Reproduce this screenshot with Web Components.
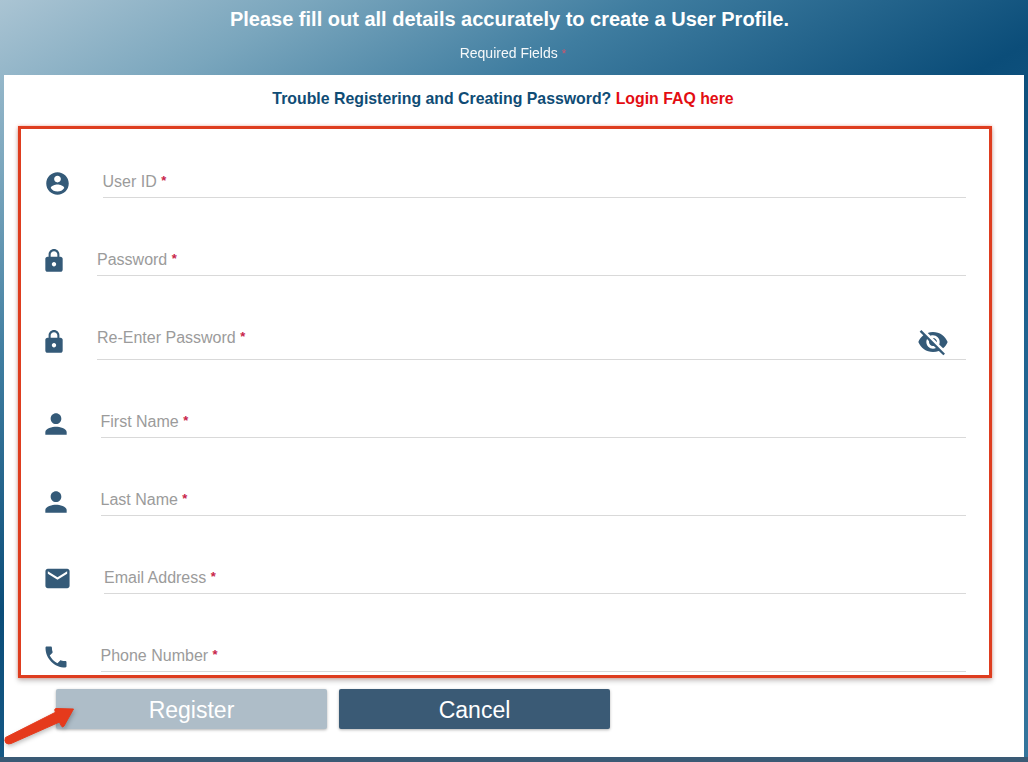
<!DOCTYPE html>
<html lang="en"><head><meta charset="utf-8"><title>Register</title>
<style>
html,body{margin:0;height:100%}
body{font-family:"Liberation Sans",Arial,sans-serif}
</style></head><body>
<reg-app>
  <reg-header slot="header"></reg-header>
  <reg-notice slot="notice"></reg-notice>
  <reg-row slot="rows" icon="account" label="User ID" style="--h:69px;--x:102.5px;--ix:44px;--is:27px;--ib:1px;--pb:4px"></reg-row>
  <reg-row slot="rows" icon="lock" label="Password" style="--h:78px;--x:97px;--ix:41px;--is:26px;--ib:2px;--pb:4px"></reg-row>
  <reg-row slot="rows" icon="lock" label="Re-Enter Password" eye style="--h:84px;--x:97px;--ix:41px;--is:26px;--ib:5px;--pb:10px"></reg-row>
  <reg-row slot="rows" icon="person" label="First Name" style="--h:78px;--x:100.5px;--ix:40px;--is:32px;--ib:-1.5px;--pb:4px"></reg-row>
  <reg-row slot="rows" icon="person" label="Last Name" style="--h:78px;--x:100.5px;--ix:40px;--is:32px;--ib:-1.5px;--pb:4px"></reg-row>
  <reg-row slot="rows" icon="mail" label="Email Address" style="--h:78px;--x:104px;--ix:43px;--is:29px;--ib:1px;--pb:4px"></reg-row>
  <reg-row slot="rows" icon="phone" label="Phone Number" style="--h:78px;--x:100.5px;--ix:42px;--is:28px;--ib:1px;--pb:4px"></reg-row>
  <reg-button slot="actions" disabled>Register</reg-button>
  <reg-button slot="actions">Cancel</reg-button>
</reg-app>
<script>
const ICONS={
account:'M12 2C6.48 2 2 6.48 2 12s4.48 10 10 10 10-4.48 10-10S17.52 2 12 2zm0 3c1.66 0 3 1.34 3 3s-1.34 3-3 3-3-1.34-3-3 1.34-3 3-3zm0 14.2c-2.5 0-4.71-1.28-6-3.22.03-1.99 4-3.08 6-3.08 1.99 0 5.97 1.09 6 3.08-1.29 1.94-3.5 3.22-6 3.22z',
lock:'M18 8h-1V6c0-2.76-2.24-5-5-5S7 3.24 7 6v2H6c-1.1 0-2 .9-2 2v10c0 1.1.9 2 2 2h12c1.1 0 2-.9 2-2V10c0-1.1-.9-2-2-2zm-6 9c-1.1 0-2-.9-2-2s.9-2 2-2 2 .9 2 2-.9 2-2 2zm3.1-9H8.9V6c0-1.71 1.39-3.1 3.1-3.1 1.71 0 3.1 1.39 3.1 3.1v2z',
person:'M12 12c2.21 0 4-1.79 4-4s-1.79-4-4-4-4 1.79-4 4 1.79 4 4 4zm0 2c-2.67 0-8 1.34-8 4v2h16v-2c0-2.66-5.33-4-8-4z',
mail:'M20 4H4c-1.1 0-1.99.9-1.99 2L2 18c0 1.1.9 2 2 2h16c1.1 0 2-.9 2-2V6c0-1.1-.9-2-2-2zm0 4l-8 5-8-5V6l8 5 8-5v2z',
phone:'M6.62 10.79c1.44 2.83 3.76 5.14 6.59 6.59l2.2-2.2c.27-.27.67-.36 1.02-.24 1.12.37 2.33.57 3.57.57.55 0 1 .45 1 1V20c0 .55-.45 1-1 1-9.39 0-17-7.61-17-17 0-.55.45-1 1-1h3.5c.55 0 1 .45 1 1 0 1.25.2 2.45.57 3.57.11.35.03.74-.25 1.02l-2.2 2.2z',
eye:'M12 7c2.76 0 5 2.24 5 5 0 .65-.13 1.26-.36 1.83l2.92 2.92c1.51-1.26 2.7-2.89 3.43-4.75-1.73-4.39-6-7.5-11-7.5-1.4 0-2.74.25-3.98.7l2.16 2.16C10.74 7.13 11.35 7 12 7zM2 4.27l2.28 2.28.46.46C3.08 8.3 1.78 10.02 1 12c1.73 4.39 6 7.5 11 7.5 1.55 0 3.03-.3 4.38-.84l.42.42L19.73 22 21 20.73 3.27 3 2 4.27zM7.53 9.8l1.55 1.55c-.05.21-.08.43-.08.65 0 1.66 1.34 3 3 3 .22 0 .44-.03.65-.08l1.55 1.55c-.67.33-1.41.53-2.2.53-2.76 0-5-2.24-5-5 0-.79.2-1.53.53-2.2zm4.31-.78l3.15 3.15.02-.16c0-1.66-1.34-3-3-3l-.17.01z'};
const svg=(n,s)=>`<svg viewBox="0 0 24 24" width="${s}" height="${s}" fill="#345a78" aria-hidden="true"><path d="${ICONS[n]}"/></svg>`;
class Base extends HTMLElement{
  render(html){this.attachShadow({mode:'open'}).innerHTML=html}
}
customElements.define('reg-app',class extends Base{connectedCallback(){if(this.shadowRoot)return;this.render(`<style>
:host{display:flex;flex-direction:column;position:relative;width:1028px;height:762px;overflow:hidden;
 background:linear-gradient(151deg,#aac4d3 0%,#7aa6bd 13%,#3f7da0 27%,#0b4d79 46%,#1f6390 68%,#34759c 100%)}
main{flex:1;min-height:0;margin:0 4px;background:#fff;display:flex;flex-direction:column}
.box{margin:0 32px 0 14px;height:552px;box-sizing:border-box;border:3px solid #de3d1f;display:flex;flex-direction:column;
 box-shadow:0 0 3px rgba(232,80,50,.45),0 3px 5px rgba(0,0,0,.22)}
.actions{display:flex;gap:12px;margin:11px 0 0 52px}
footer{height:5px;background:#3a5a75}
svg{position:absolute;left:0;top:700px;filter:drop-shadow(1px 2px 2px rgba(0,0,0,.25))}
</style>
<slot name="header"></slot>
<main><slot name="notice"></slot>
<div class="box"><slot name="rows"></slot></div>
<div class="actions"><slot name="actions"></slot></div></main>
<footer></footer>
<svg width="80" height="50" viewBox="0 0 80 50" aria-hidden="true"><path d="M5.500 37.500 Q4 41 6 43 Q8 44.500 11 43.500 L64 20 L60 10 Z" fill="#e53a1c" stroke="#e53a1c" stroke-linejoin="round"/><path d="M73.500 9 L56 8.500 Q54 9 55 11 L61 25.500 Q62.500 28 64 26 Z" fill="#e53a1c" stroke="#e53a1c" stroke-linejoin="round"/></svg>`)}});
customElements.define('reg-header',class extends Base{connectedCallback(){if(this.shadowRoot)return;this.render(`<style>
:host{display:block;height:75px;color:#fff;text-align:center}
h1{margin:0;padding:9px 9px 0 0;font:bold 20px/21px "Liberation Sans",Arial,sans-serif}
p{margin:15px 0 0;padding-right:2px;font:14px/16px "Liberation Sans",Arial,sans-serif;opacity:.95}
span{color:#d9536b;font-size:12px}
</style><h1>Please fill out all details accurately to create a User Profile.</h1><p>Required Fields <span>*</span></p>`)}});
customElements.define('reg-notice',class extends Base{connectedCallback(){if(this.shadowRoot)return;this.render(`<style>
:host{display:block;height:51px;box-sizing:border-box;padding:15px 22px 0 0;text-align:center;font:bold 15.85px/18px "Liberation Sans",Arial,sans-serif;color:#0f4c75}
a{color:#e30d12;text-decoration:none}
</style>Trouble Registering and Creating Password? <a href="#">Login FAQ here</a>`)}});
customElements.define('reg-row',class extends Base{connectedCallback(){if(this.shadowRoot)return;
const eye=this.hasAttribute('eye');
const s=parseFloat(this.style.getPropertyValue('--is'));
this.render(`<style>
:host{display:flex;align-items:flex-end;height:var(--h);margin-right:23px}
.ic{flex:none;width:calc(var(--x) - 21px);display:flex;align-items:flex-end}
svg{display:block;flex:none}
.ic svg{margin-left:calc(var(--ix) - 21px);margin-bottom:var(--ib)}
.f{flex:1;min-width:0;display:flex;justify-content:space-between;align-items:flex-end;border-bottom:1px solid #d9d9d9}
label{padding-bottom:var(--pb);font:16px/20px "Liberation Sans",Arial,sans-serif;color:#9b9b9b}
b{color:#c8264a;font-weight:700;font-size:13px;position:relative;top:-2px}
.eye{margin:0 17px 1px 0}
</style><div class="ic">${svg(this.getAttribute('icon'),s)}</div>
<div class="f"><label>${this.getAttribute('label')} <b>*</b></label>${eye?`<span class="eye">${svg('eye',32)}</span>`:''}</div>`)}});
customElements.define('reg-button',class extends Base{connectedCallback(){if(this.shadowRoot)return;this.render(`<style>
:host{display:flex;align-items:center;justify-content:center;width:271px;height:40px;box-sizing:border-box;padding-top:2px;border-radius:2px;background:#3a5a75;color:#fff;
 font:23px/26px "Liberation Sans",Arial,sans-serif;box-shadow:0 1px 3px rgba(0,0,0,.3)}
:host([disabled]){background:#aebdc8}
</style><slot></slot>`)}});
</script>
</body></html>
